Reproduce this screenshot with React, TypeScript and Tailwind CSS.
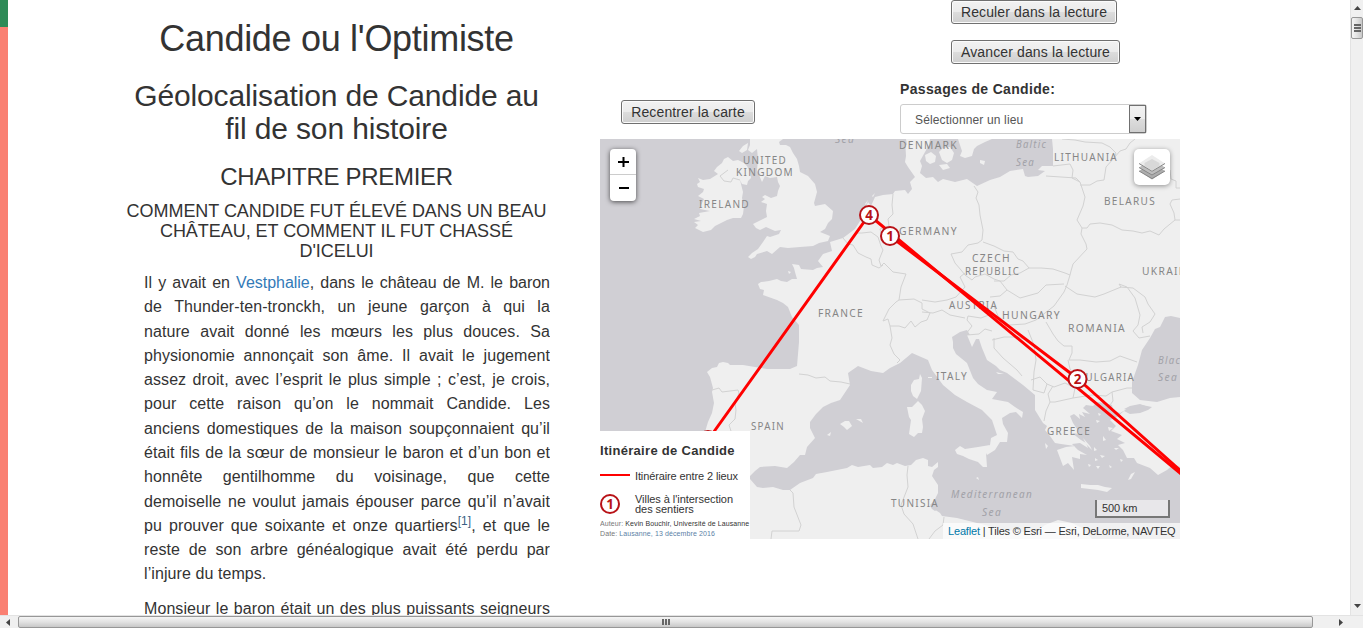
import React from "react";

const LAND = [
  // Ireland
  "M698 178L703 180L710 179L718 174L714 171L717 167L722 163L724 159L728 157L733 161L738 160L744 163L747 166L750 172L751 178L748 181L747 185L742 184L740 180L743 192L742 198L744 206L743 214L741 218L733 218L727 220L715 226L711 230L703 232L699 230L695 228L698 225L694 222L701 221L694 219L700 216L699 213L710 211L700 209L701 205L704 199L698 196L703 192L704 189L698 187L697 184L700 182Z",
  // Great Britain
  "M750 139L750 145L748 150L752 153L757 149L758 159L757 170L759 175L762 182L765 176L770 178L777 177L778 182L780 186L778 191L777 196L771 198L765 195L762 197L765 199L761 202L767 204L766 211L767 217L761 220L753 224L756 228L760 230L766 227L775 231L781 230L779 234L770 237L767 236L763 242L758 249L752 253L748 257L751 259L755 257L757 254L767 251L772 254L780 247L788 248L800 247L813 246L819 243L828 241L830 236L820 232L825 229L828 223L832 219L833 211L825 204L815 206L814 203L817 192L815 184L808 176L800 172L799 166L797 159L793 153L790 147L786 145L780 145L779 142L783 139Z",
  "M739 151L743 146L748 143L747 150L742 153Z",
  "M788 271L791 272L789 274Z",
  // Continental Europe with Turkey
  "M758 284L761 282L769 281L777 279L781 281L787 282L792 279L797 279L795 272L794 268L792 264L799 265L801 269L813 270L817 268L823 267L818 261L823 254L832 251L830 242L843 238L855 229L860 221L863 214L868 202L871 206L875 197L883 195L893 194L895 191L905 190L908 194L912 189L910 182L915 177L908 167L905 162L906 156L905 139L930 139L929 145L925 152L920 161L922 166L920 173L926 178L933 177L938 182L943 179L955 182L967 179L977 186L990 180L1000 177L1010 171L1023 169L1025 176L1028 177L1038 176L1045 171L1038 170L1042 166L1053 166L1053 149L1052 139L1180 139L1180 318L1171 316L1165 317L1160 327L1155 329L1150 338L1142 350L1138 365L1132 382L1132 393L1140 400L1157 402L1170 398L1180 397L1180 467L1174 464L1167 470L1158 475L1150 468L1137 463L1134 458L1127 458L1123 450L1118 445L1125 443L1117 439L1122 435L1111 431L1116 426L1110 420L1117 417L1124 411L1130 414L1140 413L1148 410L1152 407L1142 405L1137 405L1129 408L1120 413L1113 410L1112 405L1105 403L1097 402L1093 406L1086 405L1083 408L1090 414L1082 412L1085 417L1079 414L1080 419L1074 414L1070 416L1073 423L1077 429L1079 434L1072 433L1081 440L1086 443L1088 448L1080 443L1072 444L1078 450L1087 455L1080 454L1080 459L1072 457L1074 470L1068 463L1063 466L1057 450L1066 447L1075 446L1061 444L1055 443L1050 436L1045 430L1047 426L1043 423L1035 410L1035 395L1023 385L1007 373L1000 370L996 366L987 360L982 348L979 339L976 339L972 347L967 335L970 335L967 330L960 332L952 337L953 342L953 348L956 354L967 363L973 378L978 384L987 390L997 392L992 399L1008 402L1015 407L1023 412L1022 418L1016 412L1010 413L1002 418L1003 424L1008 433L1007 442L1000 442L995 450L987 455L985 451L990 445L991 438L997 435L992 420L982 410L967 402L955 395L943 385L932 370L928 360L912 353L900 363L890 368L883 373L871 371L858 366L848 373L850 385L840 400L831 403L823 407L816 414L810 422L810 428L815 438L807 447L805 455L800 455L794 462L787 468L775 466L760 467L755 471L750 476L730 460L705 432L708 422L712 413L714 403L712 392L713 388L710 377L707 372L712 368L717 367L719 363L723 362L728 363L730 365L743 365L767 369L790 369L797 366L799 342L799 325L792 317L788 307L783 303L777 300L763 295L764 290L760 289Z",
  // North Africa
  "M735 539L735 475L750 479L757 487L763 488L773 487L783 490L790 490L800 483L813 478L816 474L827 472L847 468L852 465L858 467L870 465L873 468L882 467L887 463L893 465L897 463L905 466L911 465L916 460L923 458L928 460L928 466L932 467L938 462L938 467L934 470L932 476L938 485L938 493L934 501L930 505L934 509L940 513L942 516L957 518L977 523L1005 530L1035 533L1045 525L1058 520L1072 523L1082 528L1092 539Z",
  // Denmark islands, Sweden
  "M925 155L931 152L936 156L935 162L930 164L926 161Z",
  "M939 152L943 148L950 147L954 153L952 160L947 163L942 160Z",
  "M939 165L947 164L950 168L943 170Z",
  "M958 139L962 151L960 156L965 158L972 156L974 149L977 146L985 142L992 139Z",
  "M980 160L985 161L984 165L980 163Z",
  // Mediterranean islands
  "M911 385L914 380L919 379L920 374L922 378L921 391L917 399L913 396L911 391Z",
  "M907 407L912 407L918 401L922 405L925 411L922 419L923 427L922 433L918 433L914 437L909 434L911 420L909 417Z",
  "M955 450L960 446L965 449L978 447L990 445L986 453L987 467L983 467L978 462L969 459L963 456L957 454Z",
  "M840 424L845 421L849 421L852 426L847 430L844 427Z",
  "M856 419L861 419L863 423Z",
  "M827 435L831 432L830 436Z",
  "M928 377L932 377L932 378L928 378Z",
  "M976 478L978 477L979 480Z",
  "M1081 484L1090 485L1098 485L1105 487L1112 488L1107 492L1098 490L1081 488Z",
  "M1128 480L1131 474L1135 472L1131 479Z",
  "M1083 438L1090 446L1092 450L1086 444Z",
  "M1045 443L1048 446L1046 449Z",
  "M1108 427L1113 428L1109 431Z M1103 436L1106 440L1103 441Z M1094 447L1097 450L1094 451Z M1100 455L1105 456L1102 458Z M1088 464L1091 465L1089 467Z M1096 466L1100 466L1098 469Z M1114 448L1119 448L1116 450Z M1095 458L1098 460L1095 461Z M1120 459L1123 460L1121 462Z M1109 465L1112 467L1110 468Z M1098 413L1101 414L1099 416Z M1096 420L1100 421L1097 423Z",
  "M985 346L989 353L986 352Z M996 372L1004 374L998 374Z",
  "M865 204L868 200L866 205Z M872 196L875 193L873 197Z",
];

const SEA_PATCH = [
  "M1124 409L1130 406L1140 404L1151 408L1142 409L1139 412L1130 411Z",
  "M902 139L906 139L907 145L903 144Z",
  "M930 506L936 503L938 509L935 511L932 509Z",
];

const BORDERS = [
  "M728 170L720 176L724 181L731 182L733 178L740 180",
  "M843 238L848 244L853 245L858 253L866 257L871 259L872 265L879 268L883 265M855 233L862 233L871 232L878 237M878 237L881 246L883 250L879 260L881 266L884 263L893 272L906 274L901 287L899 300",
  "M893 194L892 205L893 214L888 219L889 226L880 229L882 236",
  "M899 300L896 302L889 309L883 321L888 319L890 326L899 326L905 328L911 321L915 327L921 322L927 320L930 313L922 309L922 303L914 299L899 300",
  "M890 326L892 338L890 345L894 354L900 360L897 363",
  "M922 300L935 302L947 300L956 297L965 287L960 277L965 273",
  "M974 186L978 192L976 198L979 205L980 215L983 230L982 240L978 243L968 245L962 252L951 254L955 263L961 270L965 275L972 280L975 277L985 274L994 279L1000 281",
  "M983 242L994 246L1004 251L1013 252L1018 259L1023 261L1029 268L1020 273L1011 275L1004 281L994 281",
  "M1000 281L1007 290L1000 296L990 297M1007 290L1020 298L1038 293L1046 285L1064 284",
  "M1029 268L1041 268L1053 269L1065 273L1070 275L1067 285L1064 292L1054 306L1036 320L1025 324L1009 325L998 316L994 306",
  "M1070 275L1071 271L1073 264L1087 249L1086 244L1081 234L1082 228L1077 220L1083 206L1085 197L1080 182L1076 178L1046 176",
  "M1053 166L1070 164L1073 170L1072 178L1080 182",
  "M1082 228L1087 228L1090 224L1100 223L1112 225L1122 230L1133 231L1142 233L1150 231L1159 235L1164 229L1175 220L1180 220",
  "M1080 185L1090 185L1097 181L1104 180L1106 167L1114 158L1116 153L1110 147L1102 143L1085 142L1075 140L1062 139",
  "M1114 158L1120 151L1126 149L1130 143L1135 139M1170 170L1171 179L1176 181L1176 188L1180 188",
  "M1180 199L1172 200L1170 204L1174 213L1175 220",
  "M1065 286L1077 294L1095 297L1104 294L1121 287L1119 284L1127 287L1135 298L1140 315L1138 325L1133 331L1139 338L1150 336",
  "M1120 287L1133 288L1145 297L1148 304L1155 314L1150 322L1142 327L1143 333",
  "M1046 322L1053 334L1058 341L1064 346L1072 346L1072 353L1069 360L1080 360L1096 362L1110 361L1120 356L1137 362",
  "M1068 360L1070 369L1077 378M1028 330L1034 345L1036 360L1034 372M992 340L1004 337L1018 337L1026 340M994 338L994 348L1003 358L1017 370L1022 376M1034 372L1033 390L1044 393L1047 384L1054 387L1065 383L1075 388L1073 398L1055 402L1050 402L1046 411L1044 421",
  "M1047 384L1040 377L1031 380M1050 402L1048 394L1053 386M1073 398L1092 395L1106 396L1112 392L1127 388L1132 388M1112 392L1113 401L1110 405",
  "M966 334L972 326L967 320L968 316L981 318L994 313M967 335L979 334L985 329L992 331M965 318L950 315L942 310L933 313L922 312",
  "M712 390L719 388L722 392L738 390L739 393L735 403L736 410L735 419L729 425L731 431",
  "M799 374L808 375L816 378L825 377L830 381L841 382L850 384",
  "M908 466L907 475L908 487L901 505L904 514L913 524L918 539M944 517L943 525L935 531L929 539M793 493L794 507L801 525L799 531L772 531L771 539M790 490L793 493",
];

type Label = { t: string; x: number; y: number; w: number; sea?: boolean };
const LABELS: Label[] = [
  { t: "UNITED", x: 743, y: 164, w: 43 },
  { t: "KINGDOM", x: 736, y: 176, w: 57 },
  { t: "IRELAND", x: 699, y: 208, w: 50 },
  { t: "DENMARK", x: 899, y: 149, w: 58 },
  { t: "LITHUANIA", x: 1054, y: 161, w: 63 },
  { t: "BELARUS", x: 1104, y: 205, w: 51 },
  { t: "UKRAINE", x: 1142, y: 275, w: 52 },
  { t: "GERMANY", x: 899, y: 235, w: 58 },
  { t: "CZECH", x: 972, y: 262, w: 38 },
  { t: "REPUBLIC", x: 965, y: 275, w: 54 },
  { t: "AUSTRIA", x: 949, y: 309, w: 48 },
  { t: "HUNGARY", x: 1002, y: 319, w: 58 },
  { t: "ROMANIA", x: 1068, y: 332, w: 57 },
  { t: "BULGARIA", x: 1078, y: 381, w: 56 },
  { t: "FRANCE", x: 818, y: 317, w: 45 },
  { t: "ITALY", x: 936, y: 380, w: 31 },
  { t: "SPAIN", x: 751, y: 430, w: 33 },
  { t: "GREECE", x: 1047, y: 435, w: 43 },
  { t: "TUNISIA", x: 891, y: 507, w: 47 },
  { t: "Sea", x: 835, y: 143, w: 19, sea: true },
  { t: "Baltic", x: 1016, y: 148, w: 30, sea: true },
  { t: "Sea", x: 1016, y: 166, w: 18, sea: true },
  { t: "Black", x: 1158, y: 364, w: 28, sea: true },
  { t: "Sea", x: 1158, y: 381, w: 19, sea: true },
  { t: "Mediterranean", x: 951, y: 498, w: 81, sea: true },
  { t: "Sea", x: 982, y: 516, w: 19, sea: true },
];

function Marker({ x, y, n }: { x: number; y: number; n?: string }) {
  return (
    <g>
      <circle cx={x} cy={y} r="9" fill="#fff" stroke="#b81217" strokeWidth="2" />
      {n && (
        <text x={x} y={y + 4.9} textAnchor="middle" fill="#b81217" fontSize="13.5" className="font-['Open_Sans','Noto_Sans',sans-serif] font-bold">
          {n}
        </text>
      )}
    </g>
  );
}

function MapDrawing() {
  return (
    <svg width="580" height="400" viewBox="600 139 580 400" className="block">
      <rect x="600" y="139" width="580" height="400" fill="#d0cfd4" />
      {LAND.map((d) => (
        <path key={d} d={d} fill="#efefef" />
      ))}
      {SEA_PATCH.map((d) => (
        <path key={d} d={d} fill="#d0cfd4" />
      ))}
      {BORDERS.map((d) => (
        <path key={d} d={d} fill="none" stroke="#d2d2d2" strokeWidth="1" strokeLinejoin="round" />
      ))}
      {LABELS.map((l) => (
        <text
          key={l.t + l.x + l.y}
          x={l.x}
          y={l.y}
          textLength={l.w + 1}
          lengthAdjust="spacingAndGlyphs"
          fontSize="11.5"
          fill={l.sea ? "#a2a2a8" : "#868686"}
          className={l.sea ? "font-['Noto_Sans',sans-serif] italic tracking-[1.5px]" : "font-['Noto_Sans',sans-serif] tracking-[1.5px]"}
        >
          {l.t}
        </text>
      ))}
      <g fill="none" stroke="#f00" strokeWidth="3" strokeLinejoin="round">
        <path d="M708 440L869 215L1182 474.6" />
        <path d="M890 236L1077.5 378.5L1182 472" />
      </g>
      <Marker x={708} y={440} />
      <Marker x={869} y={215} n="4" />
      <Marker x={890} y={236} n="1" />
      <Marker x={1077.5} y={379} n="2" />
    </svg>
  );
}

function LayersIcon() {
  return (
    <svg width="26" height="26" viewBox="0 0 26 26">
      <path d="M0 17L13 9L26 17L13 25.500Z" fill="#adadad" />
      <path d="M0 17L13 24.600L26 17" fill="none" stroke="#868686" strokeWidth="1" />
      <path d="M0 13.500L13 5L26 13.500L13 21.500Z" fill="#bdbdbd" />
      <path d="M0 13.500L13 21L26 13.500" fill="none" stroke="#868686" strokeWidth="1" />
      <path d="M0 9.500L13 1L26 9.500L13 17.500Z" fill="#ececec" />
      <path d="M5.500 9L13 5L20.500 9L20.500 12L13 16.500L5.500 12Z" fill="#d8d8d8" />
      <path d="M0 9.500L13 17.300L26 9.500" fill="none" stroke="#868686" strokeWidth="1" />
    </svg>
  );
}

function Button({ children, width }: { children: string; width: string }) {
  return (
    <button
      className={
        "block h-6 shrink-0 whitespace-nowrap rounded-[3px] border border-[#707070] bg-[linear-gradient(#f2f2f2_0%,#ebebeb_50%,#dddddd_50%,#cfcfcf_100%)] text-center text-[14px] leading-[21px] text-[#333] shadow-[inset_0_0_0_1px_#fbfbfb] tracking-[0.13px] " +
        width
      }
    >
      {children}
    </button>
  );
}

function Controls() {
  return (
    <div className="flex h-[139px]">
      <div className="w-[300px] pl-[21px] pt-[100px]">
        <Button width="w-[134px]">Recentrer la carte</Button>
      </div>
      <div className="w-[280px]">
        <div className="flex flex-col gap-4 pl-[51px]">
          <Button width="w-[166px]">Reculer dans la lecture</Button>
          <Button width="w-[169px]">Avancer dans la lecture</Button>
        </div>
        <div className="mt-[15px] h-[25px] whitespace-nowrap text-[14px] font-bold leading-5 tracking-[0.33px]">Passages de Candide:</div>
        <div className="flex h-[30px] w-[247px] items-stretch justify-between rounded-[3px] border border-[#ccc] bg-white pl-[14px] text-[12px] leading-[30px] text-[#555]">
          <span className="tracking-[0.15px]">Sélectionner un lieu</span>
          <span className="flex w-[17px] items-center justify-center border border-[#707070] bg-[linear-gradient(#f2f2f2_0%,#ebebeb_50%,#dddddd_50%,#cfcfcf_100%)]">
            <svg width="7" height="4" viewBox="0 0 7 4">
              <path d="M0 0H7L3.500 4Z" fill="#000" />
            </svg>
          </span>
        </div>
      </div>
    </div>
  );
}

function Legend() {
  return (
    <div className="absolute bottom-0 left-0 h-[108px] w-[150px] overflow-hidden bg-white">
      <div className="mt-[11px] h-[18px] whitespace-nowrap text-[13px] font-bold leading-[18px] tracking-[0.3px]">Itinéraire de Candide</div>
      <div className="mt-[8px] flex h-4 items-center">
        <span className="mb-[2px] h-[2px] w-[30px] bg-[#f00]" />
        <span className="ml-[5px] whitespace-nowrap text-[11px] leading-4 tracking-[-0.12px]">Itinéraire entre 2 lieux</span>
      </div>
      <div className="mt-[10px] flex h-5 items-center">
        <svg width="20" height="20" viewBox="0 0 20 20">
          <Marker x={10} y={10} n="1" />
        </svg>
        <span className="ml-[15px] whitespace-nowrap text-[11px] leading-[10px] tracking-[-0.05px]">
          Villes à l'intersection
          <br />
          des sentiers
        </span>
      </div>
      <div className="mt-[5px] whitespace-nowrap text-[7px] leading-[10px] tracking-[0.1px]">
        <div>
          <span className="text-[#777]">Auteur:</span> Kevin Bouchir, Université de Lausanne
        </div>
        <div className="text-[#777]">
          Date: <span className="text-[#5b7fa6]">Lausanne, 13 décembre 2016</span>
        </div>
      </div>
    </div>
  );
}

function MapPanel() {
  return (
    <div className="relative h-[400px] w-[580px] overflow-hidden">
      <MapDrawing />
      <div className="absolute left-[10px] top-[10px] w-[26px] overflow-visible rounded-[4px] bg-white shadow-[0_1px_5px_rgba(0,0,0,0.65)]">
        <div className="flex h-[26px] items-center justify-center border-b border-[#ccc] pl-px">
          <svg width="11" height="10" viewBox="0 0 11 10">
            <path d="M0 4H11V6H0ZM4.500 0H6.500V10H4.500Z" fill="#000" />
          </svg>
        </div>
        <div className="flex h-[26px] items-center justify-center pl-px">
          <svg width="10" height="2" viewBox="0 0 10 2">
            <path d="M0 0H10V2H0Z" fill="#000" />
          </svg>
        </div>
      </div>
      <div className="absolute right-[10px] top-[10px] flex size-9 items-center justify-center rounded-[5px] bg-white shadow-[0_1px_5px_rgba(0,0,0,0.4)]">
        <LayersIcon />
      </div>
      <Legend />
      <div className="absolute bottom-[21px] right-[10px] h-[18px] w-[75px] border-2 border-t-0 border-[#777] bg-white/50 pl-[5px] text-[11px] leading-[16px] tracking-[-0.15px]">500 km</div>
      <div className="absolute bottom-0 right-0 h-4 w-[237px] whitespace-nowrap bg-white/70 pl-[5px] text-[11px] leading-[16px] tracking-[-0.18px]">
        <span className="text-[#0078a8]">Leaflet</span> | Tiles © Esri — Esri, DeLorme, NAVTEQ
      </div>
    </div>
  );
}

const OPENING_LINES = [
  "de Thunder-ten-tronckh, un jeune garçon à qui la",
  "nature avait donné les mœurs les plus douces. Sa",
  "physionomie annonçait son âme. Il avait le jugement",
  "assez droit, avec l’esprit le plus simple ; c’est, je crois,",
  "pour cette raison qu’on le nommait Candide. Les",
  "anciens domestiques de la maison soupçonnaient qu’il",
  "était fils de la sœur de monsieur le baron et d’un bon et",
  "honnête gentilhomme du voisinage, que cette",
  "demoiselle ne voulut jamais épouser parce qu’il n’avait",
];

function Line({ children }: { children: React.ReactNode }) {
  return <span className="block whitespace-nowrap [text-align-last:justify]">{children}</span>;
}

function Story() {
  return (
    <main className="ml-[117px] h-[616px] w-[425px] overflow-hidden pt-[19px]">
      <h1 className="pr-[2px] text-center text-[36px] leading-[39.6px] tracking-[-0.3px]">Candide ou l'Optimiste</h1>
      <h2 className="mt-5 pr-[2px] text-center text-[30px] leading-[33px] tracking-[-0.14px]">Géolocalisation de Candide au fil de son histoire</h2>
      <h3 className="mt-[19px] pr-[2px] text-center text-[24px] leading-[26.4px] tracking-[-0.3px]">CHAPITRE PREMIER</h3>
      <h4 className="mt-[11px] pr-[2px] text-center text-[18px] leading-5 tracking-[-0.04px]">COMMENT CANDIDE FUT ÉLEVÉ DANS UN BEAU CHÂTEAU, ET COMMENT IL FUT CHASSÉ D'ICELUI</h4>
      <div className="ml-[19px] mt-[10px] flex w-[406px] flex-col gap-[10px] text-justify text-[16px] leading-[24.28px] tracking-[0.08px]">
        <p>
          <Line>
            <span className="tracking-[-0.02px]">Il y avait en <span className="text-[#337ab7]">Vestphalie</span>, dans le château de M. le baron</span>
          </Line>
          {OPENING_LINES.map((line) => (
            <Line key={line}>{line}</Line>
          ))}
          <Line>
            pu prouver que soixante et onze quartiers<sup className="text-[12px] leading-none text-[#3a5f85]">[1]</sup>, et que le
          </Line>
          <Line>reste de son arbre généalogique avait été perdu par</Line>
          <span className="block">l’injure du temps.</span>
        </p>
        <p>
          <Line>Monsieur le baron était un des plus puissants seigneurs</Line>
        </p>
      </div>
    </main>
  );
}

function VerticalScrollbar() {
  return (
    <div className="ml-auto flex w-[13px] flex-col items-center border-l border-[#e3e3e3] bg-[#f0f0f0]">
      <svg width="7" height="4" viewBox="0 0 7 4" className="mt-[6px]">
        <path d="M0 4H7L3.500 0Z" fill="#444" />
      </svg>
      <div className="mt-[7px] flex h-[22px] w-full flex-col items-center justify-center gap-[1px] rounded-[2px] border border-[#979797] bg-[linear-gradient(90deg,#f5f5f5,#e2e2e2_50%,#c8c8c8)]">
        <span className="h-[2px] w-[7px] bg-[#666]" />
        <span className="h-[2px] w-[7px] bg-[#666]" />
        <span className="h-[2px] w-[7px] bg-[#666]" />
      </div>
      <svg width="7" height="4" viewBox="0 0 7 4" className="mb-[7px] mt-auto">
        <path d="M0 0H7L3.500 4Z" fill="#444" />
      </svg>
    </div>
  );
}

function HorizontalScrollbar() {
  return (
    <div className="flex h-[13px] items-center border-t border-[#e3e3e3] bg-[#f0f0f0]">
      <svg width="4" height="7" viewBox="0 0 4 7" className="ml-[6px]">
        <path d="M4 0V7L0 3.500Z" fill="#444" />
      </svg>
      <div className="ml-2 flex h-full w-[1295px] items-center justify-center gap-[1px] rounded-[2px] border border-[#979797] bg-[linear-gradient(#f5f5f5,#e2e2e2_50%,#c8c8c8)]">
        <span className="h-[6px] w-[2px] bg-[#666]" />
        <span className="h-[6px] w-[2px] bg-[#666]" />
        <span className="h-[6px] w-[2px] bg-[#666]" />
      </div>
      <svg width="4" height="7" viewBox="0 0 4 7" className="ml-[26px]">
        <path d="M0 0V7L4 3.500Z" fill="#444" />
      </svg>
    </div>
  );
}

export default function App() {
  return (
    <div className="flex h-[628px] w-[1363px] flex-col overflow-hidden bg-white font-['Liberation_Sans',Arial,sans-serif] text-[#333]">
      <div className="flex h-[615px] overflow-hidden">
        <div className="flex w-2 flex-col bg-[#fa8072]">
          <div className="h-[27px] bg-[#2e8b57]" />
        </div>
        <Story />
        <div className="ml-[50px] w-[580px]">
          <Controls />
          <MapPanel />
        </div>
        <VerticalScrollbar />
      </div>
      <HorizontalScrollbar />
    </div>
  );
}
